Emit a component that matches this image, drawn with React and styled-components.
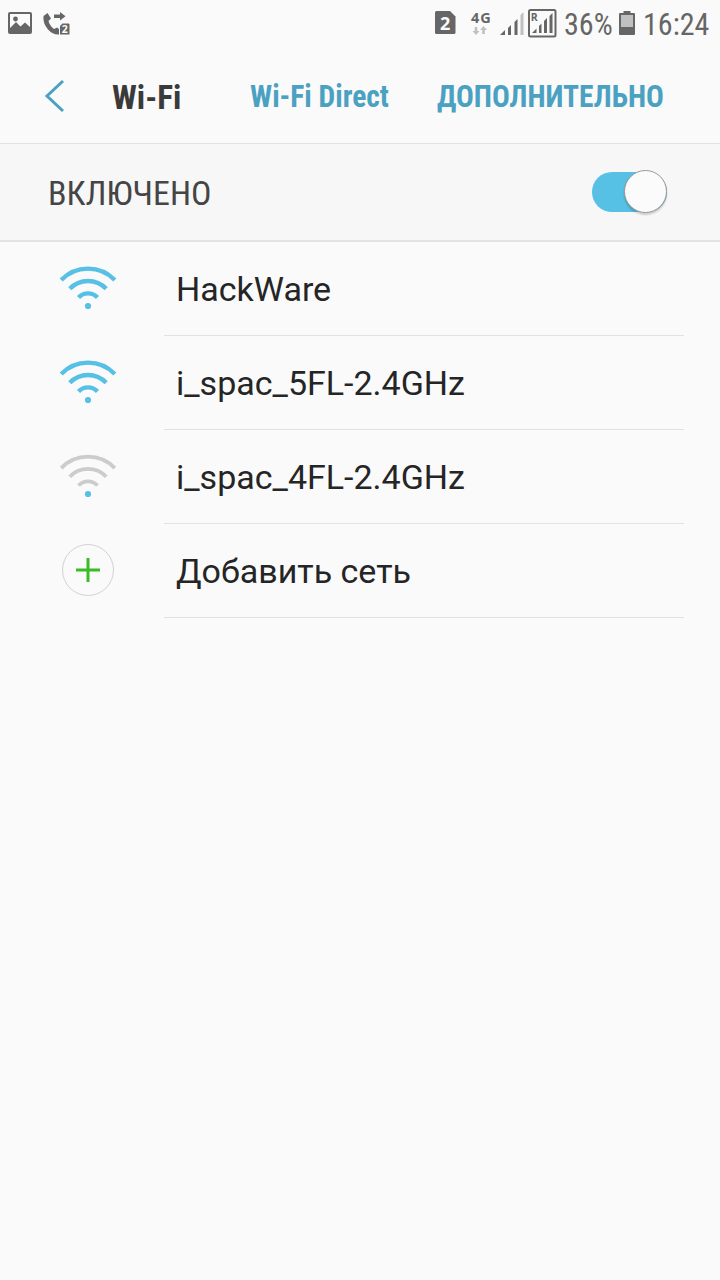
import React, { useState } from "react"
import styled, { createGlobalStyle } from "styled-components"

const colors = {
  background: "#fafafa",
  panel: "#f7f7f7",
  line: "#e2e2e2",
  status: "#666666",
  statusLight: "#c0c0c0",
  accent: "#4aa1c1",
  signal: "#57c0e5",
  signalOff: "#cccccc",
  title: "#3a3a3a",
  text: "#252525",
  add: "#3bbb27",
}

const GlobalStyle = createGlobalStyle`
  body {
    margin: 0;
    background: ${colors.background};
    font-family: Roboto, "Noto Sans", sans-serif;
  }
`

const Screen = styled.main`
  min-height: 1280px;
  background: ${colors.background};
`

const StatusBar = styled.header`
  display: flex;
  justify-content: space-between;
  height: 48px;
`

const StatusGroup = styled.div`
  display: flex;
  align-items: flex-start;
`

const Icon = styled.svg`
  display: block;
  flex: none;
  overflow: visible;
`

const IconText = styled.text`
  font-family: "Open Sans", sans-serif;
  font-weight: 700;
`

// keeps the drawn width of condensed labels in the flow
const LabelBox = styled.span`
  display: block;
  flex: none;
  width: ${({ $width }) => $width}px;
  white-space: nowrap;
`

const LabelText = styled.span`
  display: inline-block;
  font-stretch: 75%;
  transform: scaleX(${({ $scale }) => $scale || 1});
  transform-origin: left;
`

const StatusLabel = styled(LabelBox)`
  height: 48px;
  line-height: 49px;
  font-size: 31px;
  color: ${colors.status};
`

const Toolbar = styled.nav`
  display: flex;
  align-items: center;
  box-sizing: border-box;
  height: 96px;
  padding-left: 40px;
  border-bottom: 1px solid ${colors.line};
`

const BackButton = styled.button`
  display: flex;
  width: 72px;
  padding: 0;
  border: none;
  background: transparent;
  cursor: pointer;
`

const Title = styled(LabelBox)`
  margin-right: 69px;
  padding-top: 2px;
  font-size: 34px;
  font-weight: 700;
  line-height: 40px;
  color: ${colors.title};
`

const Action = styled(LabelBox)`
  margin-right: 48px;
  padding-top: 2px;
  font-size: 30.5px;
  font-weight: 700;
  line-height: 40px;
  color: ${colors.accent};
`

const SwitchRow = styled.section`
  display: flex;
  align-items: center;
  justify-content: space-between;
  box-sizing: border-box;
  height: 98px;
  padding: 0 53px 0 48px;
  border-bottom: 2px solid ${colors.line};
  background: ${colors.panel};
`

const SwitchLabel = styled(LabelBox)`
  padding-top: 2px;
  font-size: 34px;
  line-height: 40px;
  color: #454545;
`

const Switch = styled.button`
  display: flex;
  align-items: center;
  justify-content: ${({ $on }) => ($on ? "flex-end" : "flex-start")};
  width: 75px;
  height: 40px;
  padding: 0;
  border: none;
  border-radius: 20px;
  background: ${({ $on }) => ($on ? colors.signal : colors.signalOff)};
  cursor: pointer;
`

const Knob = styled.span`
  box-sizing: border-box;
  flex: none;
  width: 43px;
  height: 43px;
  margin-bottom: 1px;
  border: 1px solid #999999;
  border-radius: 50%;
  background: #fbfbfb;
  box-shadow: 0 2px 2px rgba(0, 0, 0, 0.18);
`

const List = styled.ul`
  margin: 0;
  padding: 0;
  list-style: none;
`

const Row = styled.li`
  display: flex;
  height: 94px;
  padding: 0 36px 0 58px;
`

const RowIcon = styled.div`
  width: 106px;
  padding-top: 20px;
`

const RowBody = styled.div`
  flex: 1;
  box-sizing: border-box;
  padding-left: 12px;
  border-bottom: 1px solid ${colors.line};
  font-size: 34px;
  line-height: 94px;
  color: ${colors.text};
`

function ImageIcon() {
  return (
    <Icon width="24" height="22" viewBox="0 0 24 22">
      <path
        fillRule="evenodd"
        fill={colors.status}
        d="M2 0H22Q24 0 24 2V20Q24 22 22 22H2Q0 22 0 20V2Q0 0 2 0ZM2 2V16L8 10L12.5 14.5L17 10.5L22 15V2Z"
      />
      <circle cx="7.5" cy="7" r="2.4" fill={colors.status} />
    </Icon>
  )
}

function CallForwardIcon() {
  return (
    <Icon width="27" height="24" viewBox="0 0 27 24">
      <path
        fill={colors.status}
        d="M0.5 4L4.5 1L8 6.5L5.5 9Q6.5 13.5 11 17L14 15.5L16 17V22.5Q10 23 5 17.5Q-0.5 11 0.5 4Z"
      />
      <path fill={colors.status} d="M11 2.5H17V0L22.5 4.2L17 8.5V6H11Z" />
      <path fill={colors.status} d="M17 14L19.5 11.5H25.5Q26.5 11.5 26.5 12.5V22.5H17Z" />
      <IconText x="18.7" y="21" fontSize="10.5" fill="#fafafa">
        2
      </IconText>
    </Icon>
  )
}

function SimIcon() {
  return (
    <Icon width="21" height="24" viewBox="0 0 21 24">
      <path
        fill={colors.status}
        d="M1.5 0H15L20.5 5.5V21.5Q20.5 23 19 23H1.5Q0 23 0 21.5V1.5Q0 0 1.5 0Z"
      />
      <IconText x="5" y="18.7" fontSize="18" fill="#fafafa">
        2
      </IconText>
    </Icon>
  )
}

function NetworkIcon() {
  return (
    <Icon width="22" height="24" viewBox="0 0 22 24">
      <IconText x="1" y="12" fontSize="14.5" letterSpacing="0.9" fill={colors.status}>
        4G
      </IconText>
      <path fill={colors.statusLight} d="M4.7 16H7.3V20H9.5L6 24L2.5 20H4.7Z" />
      <path fill={colors.statusLight} d="M12.2 23H14.8V19H17L13.5 15L10 19H12.2Z" />
    </Icon>
  )
}

function SignalIcon() {
  return (
    <Icon width="24" height="24" viewBox="0 0 24 24">
      <path fill={colors.status} d="M0 24L5 19V24Z" />
      <path fill={colors.status} d="M8 24V17L11 14V24Z" />
      <path fill={colors.status} d="M14.5 24V11L17.5 8V24Z" />
      <path fill={colors.statusLight} d="M20.5 24V4L23.5 1V24Z" />
    </Icon>
  )
}

function RoamingSignalIcon() {
  return (
    <Icon width="29" height="29" viewBox="0 0 29 29">
      <rect
        x="1"
        y="1"
        width="26.5"
        height="26.5"
        rx="1.5"
        fill="none"
        stroke={colors.status}
        strokeWidth="2"
      />
      <IconText x="2.8" y="12.2" fontSize="10.5" fill={colors.status}>
        R
      </IconText>
      <path fill={colors.status} d="M4 24L8.5 19.5V24Z" />
      <path fill={colors.status} d="M11 24V17L13.5 14.5V24Z" />
      <path fill={colors.status} d="M16 24V12L19 9V24Z" />
      <path fill={colors.status} d="M21.5 24V7L24.5 4V24Z" />
    </Icon>
  )
}

function BatteryIcon() {
  return (
    <Icon width="16" height="24" viewBox="0 0 16 24">
      <path fill={colors.status} d="M4.5 0H11.5V2H15Q16 2 16 3V23Q16 24 15 24H1Q0 24 0 23V3Q0 2 1 2H4.5Z" />
      <rect x="2" y="4" width="12" height="12" fill={colors.statusLight} />
    </Icon>
  )
}

function WifiIcon({ weak }) {
  return (
    <Icon width="60" height="54" viewBox="0 0 60 54">
      <g
        fill="none"
        stroke={weak ? colors.signalOff : colors.signal}
        strokeWidth={weak ? 3.8 : 4.4}
      >
        <path d="M3.2 18.1A37 37 0 0 1 56.8 18.1" />
        <path d="M11.8 26.8A25 25 0 0 1 48.2 26.8" />
        <path d="M20.5 35.5A13 13 0 0 1 39.5 35.5" />
      </g>
      <circle cx="30" cy="44" r="3.1" fill={colors.signal} />
    </Icon>
  )
}

function AddIcon() {
  return (
    <Icon width="60" height="54" viewBox="0 0 60 54">
      <circle cx="30" cy="26" r="25.5" fill="none" stroke="#d2d2d2" />
      <path d="M18 26H42M30 14V38" stroke={colors.add} strokeWidth="3" />
    </Icon>
  )
}

const Spacer = styled.span`
  flex: none;
  width: ${({ $w }) => $w}px;
`

const IconSlot = styled.span`
  padding: ${({ $top }) => $top}px 0 0 ${({ $left }) => $left || 0}px;
`

const networks = [
  { name: "HackWare" },
  { name: "i_spac_5FL-2.4GHz" },
  { name: "i_spac_4FL-2.4GHz", weak: true },
]

export default function App() {
  const [enabled, setEnabled] = useState(true)

  return (
    <Screen>
      <GlobalStyle />
      <StatusBar>
        <StatusGroup>
          <IconSlot $top={12} $left={8}>
            <ImageIcon />
          </IconSlot>
          <IconSlot $top={12} $left={11}>
            <CallForwardIcon />
          </IconSlot>
        </StatusGroup>
        <StatusGroup>
          <IconSlot $top={11}>
            <SimIcon />
          </IconSlot>
          <IconSlot $top={11} $left={14}>
            <NetworkIcon />
          </IconSlot>
          <IconSlot $top={11} $left={8}>
            <SignalIcon />
          </IconSlot>
          <IconSlot $top={9} $left={4}>
            <RoamingSignalIcon />
          </IconSlot>
          <Spacer $w={7} />
          <StatusLabel $width={48}>
            <LabelText $scale={0.97}>36%</LabelText>
          </StatusLabel>
          <IconSlot $top={11} $left={7}>
            <BatteryIcon />
          </IconSlot>
          <Spacer $w={8} />
          <StatusLabel $width={77}>
            <LabelText $scale={0.97}>16:24</LabelText>
          </StatusLabel>
        </StatusGroup>
      </StatusBar>

      <Toolbar>
        <BackButton aria-label="Назад">
          <Icon width="28" height="36" viewBox="0 0 28 36">
            <path d="M23 3L7 18L23 33" fill="none" stroke={colors.accent} strokeWidth="3" />
          </Icon>
        </BackButton>
        <Title $width={69}>
          <LabelText $scale={0.975}>Wi-Fi</LabelText>
        </Title>
        <Action $width={139}>
          <LabelText $scale={0.968}>Wi-Fi Direct</LabelText>
        </Action>
        <Action $width={227}>
          <LabelText $scale={0.968}>ДОПОЛНИТЕЛЬНО</LabelText>
        </Action>
      </Toolbar>

      <SwitchRow>
        <SwitchLabel $width={163}>
          <LabelText>ВКЛЮЧЕНО</LabelText>
        </SwitchLabel>
        <Switch
          role="switch"
          aria-checked={enabled}
          aria-label="Wi-Fi"
          $on={enabled}
          onClick={() => setEnabled(!enabled)}
        >
          <Knob />
        </Switch>
      </SwitchRow>

      <List>
        {networks.map(({ name, weak }) => (
          <Row key={name}>
            <RowIcon>
              <WifiIcon weak={weak} />
            </RowIcon>
            <RowBody>{name}</RowBody>
          </Row>
        ))}
        <Row>
          <RowIcon>
            <AddIcon />
          </RowIcon>
          <RowBody>Добавить сеть</RowBody>
        </Row>
      </List>
    </Screen>
  )
}
